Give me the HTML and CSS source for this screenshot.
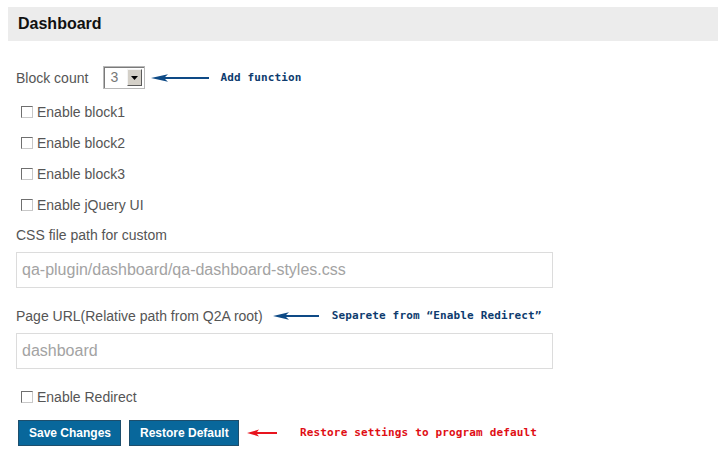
FILE: index.html
```html
<!DOCTYPE html>
<html>
<head>
<meta charset="utf-8">
<link rel="stylesheet" href="styles.css">
</head>
<body>
<div class="page">
  <div class="header">Dashboard</div>
  <div class="form">
    <div class="row row-count">
      <span class="label">Block count</span>
      <span class="select"><span class="select-value">3</span><span class="select-btn"><svg width="7" height="4" viewBox="0 0 7 4"><path d="M0 0H7L3.5 4Z" fill="#000"/></svg></span></span>
      <svg class="arrow arrow-count" width="58" height="8" viewBox="0 0 58 8"><path d="M0 4L17 0.3L14 3.1H58V4.9H14L17 7.7Z" fill="#0e4a86"/></svg>
      <span class="note note-blue">Add function</span>
    </div>
    <div class="row check-row first-check"><span class="checkbox"></span><span class="label">Enable block1</span></div>
    <div class="row check-row"><span class="checkbox"></span><span class="label">Enable block2</span></div>
    <div class="row check-row"><span class="checkbox"></span><span class="label">Enable block3</span></div>
    <div class="row check-row"><span class="checkbox"></span><span class="label">Enable jQuery UI</span></div>
    <div class="row field-label css-label"><span class="label">CSS file path for custom</span></div>
    <div class="input">qa-plugin/dashboard/qa-dashboard-styles.css</div>
    <div class="row field-label url-label">
      <span class="label">Page URL(Relative path from Q2A root)</span>
      <svg class="arrow arrow-url" width="46" height="8" viewBox="0 0 46 8"><path d="M0 4L16 0.3L13 3.1H46V4.9H13L16 7.7Z" fill="#0e4a86"/></svg>
      <span class="note note-blue">Separete from “Enable Redirect”</span>
    </div>
    <div class="input">dashboard</div>
    <div class="row check-row redirect-row"><span class="checkbox"></span><span class="label">Enable Redirect</span></div>
    <div class="row buttons">
      <span class="btn btn-save">Save Changes</span>
      <span class="btn btn-restore">Restore Default</span>
      <svg class="arrow arrow-restore" width="30" height="8" viewBox="0 0 30 8"><path d="M0 4L12 0.6L10 3.1H30V4.9H10L12 7.4Z" fill="#e8141e"/></svg>
      <span class="note note-red">Restore settings to program default</span>
    </div>
  </div>
</div>
</body>
</html>
```
FILE: styles.css
```css
html, body {
  margin: 0;
  padding: 0;
  background: #ffffff;
}

.page {
  padding: 7px 6px 0 8px;
  font-family: "Liberation Sans", Arial, sans-serif;
  color: #555555;
}

.header {
  height: 34px;
  line-height: 33px;
  background: #ececec;
  padding-left: 10px;
  font-size: 16px;
  font-weight: bold;
  color: #111111;
}

.form {
  display: flex;
  flex-direction: column;
  padding-left: 8px;
}

.row {
  display: flex;
  align-items: center;
  height: 20px;
  line-height: 20px;
  font-size: 14px;
}

.label {
  white-space: nowrap;
}

.row-count {
  margin-top: 25px;
  height: 23px;
}

.select {
  display: flex;
  align-items: center;
  box-sizing: border-box;
  width: 42px;
  height: 23px;
  margin-left: 15px;
  border: 1px solid #b8b8b8;
  box-shadow: inset 1px 1px 0 #7a7a7a;
  background: #ffffff;
  padding: 2px 2px 2px 0;
}

.select-value {
  flex: 1;
  padding-left: 6px;
  font-size: 14px;
  line-height: 17px;
  color: #777777;
}

.select-btn {
  display: flex;
  align-items: center;
  justify-content: center;
  box-sizing: border-box;
  width: 15px;
  height: 17px;
  background: #d4d0c8;
  border: 1px solid;
  border-color: #f4f4f4 #5a5a5a #5a5a5a #f4f4f4;
}

.arrow {
  display: block;
  flex: none;
}

.arrow-count {
  margin-left: 6px;
}

.note {
  font-family: "DejaVu Sans Mono", "Liberation Mono", monospace;
  font-weight: bold;
  font-size: 11px;
  letter-spacing: 0.15px;
  white-space: nowrap;
}

.note-blue {
  color: #0d3b6e;
}

.row-count .note {
  margin-left: 11px;
}

.check-row {
  margin-top: 11px;
}

.first-check {
  margin-top: 13px;
}

.checkbox {
  box-sizing: border-box;
  width: 12px;
  height: 12px;
  margin-left: 5px;
  margin-right: 4px;
  border: 1px solid;
  border-color: #6f6f6f #c8c8c8 #c8c8c8 #6f6f6f;
  background: #ffffff;
  flex: none;
}

.css-label {
  margin-top: 10px;
}

.input {
  box-sizing: border-box;
  width: 537px;
  height: 36px;
  line-height: 34px;
  margin-top: 7px;
  padding-left: 5px;
  border: 1px solid #dcdcdc;
  font-size: 16px;
  color: #a3a3a3;
}

.url-label {
  margin-top: 18px;
}

.arrow-url {
  margin-left: 10px;
}

.url-label .note {
  margin-left: 13px;
}

.redirect-row {
  margin-top: 18px;
}

.buttons {
  margin-top: 13px;
  height: 26px;
  padding-left: 2px;
}

.btn {
  box-sizing: border-box;
  height: 26px;
  line-height: 24px;
  padding: 0 10px;
  background: #08679b;
  border: 1px solid #1d4e6c;
  color: #ffffff;
  font-size: 12px;
  font-weight: bold;
  white-space: nowrap;
}

.btn-save {
  width: 103px;
  text-align: center;
}

.btn-restore {
  width: 110px;
  margin-left: 8px;
  text-align: center;
}

.arrow-restore {
  margin-left: 8px;
}

.note-red {
  color: #e00e14;
  margin-left: 23px;
}
```
